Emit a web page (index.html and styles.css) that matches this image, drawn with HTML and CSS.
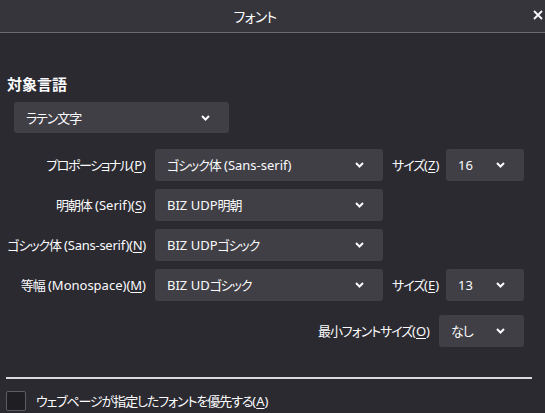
FILE: index.html
```html
<!DOCTYPE html>
<html lang="ja">
<head>
<meta charset="utf-8">
<link rel="stylesheet" href="styles.css">
</head>
<body>
<div class="dialog">
  <div class="titlebar">
    <div class="title">フォント</div>
    <div class="close">
      <svg width="10" height="10" viewBox="0 0 10 10"><path d="M1 1L9 9M9 1L1 9" stroke="#fbfbfe" stroke-width="1.8" fill="none"/></svg>
    </div>
  </div>
  <div class="content">
    <h2 class="heading">対象言語</h2>
    <div class="select lang"><span class="jp">ラテン文字</span><svg class="chev" width="9" height="6" viewBox="0 0 9 6"><path d="M1 1L4.5 4.5L8 1" stroke="#fbfbfe" stroke-width="2" fill="none"/></svg></div>

    <div class="grid">
      <div class="label"><span class="jp tight">プロポーショナル</span>(<u>P</u>)</div>
      <div class="select"><span><span class="jp">ゴシック体</span> (Sans-serif)</span><svg class="chev" width="9" height="6" viewBox="0 0 9 6"><path d="M1 1L4.5 4.5L8 1" stroke="#fbfbfe" stroke-width="2" fill="none"/></svg></div>
      <div class="label small"><span class="jp">サイズ</span>(<u>Z</u>)</div>
      <div class="select"><span>16</span><svg class="chev" width="9" height="6" viewBox="0 0 9 6"><path d="M1 1L4.5 4.5L8 1" stroke="#fbfbfe" stroke-width="2" fill="none"/></svg></div>

      <div class="label"><span class="jp">明朝体</span>&nbsp;(Serif)(<u>S</u>)</div>
      <div class="select"><span>BIZ UDP<span class="jp">明朝</span></span><svg class="chev" width="9" height="6" viewBox="0 0 9 6"><path d="M1 1L4.5 4.5L8 1" stroke="#fbfbfe" stroke-width="2" fill="none"/></svg></div>
      <div></div><div></div>

      <div class="label condensed"><span class="jp">ゴシック体</span>&nbsp;(Sans-serif)(<u>N</u>)</div>
      <div class="select"><span>BIZ UDP<span class="jp">ゴシック</span></span><svg class="chev" width="9" height="6" viewBox="0 0 9 6"><path d="M1 1L4.5 4.5L8 1" stroke="#fbfbfe" stroke-width="2" fill="none"/></svg></div>
      <div></div><div></div>

      <div class="label"><span class="jp">等幅</span>&nbsp;(Monospace)(<u>M</u>)</div>
      <div class="select"><span>BIZ UD<span class="jp">ゴシック</span></span><svg class="chev" width="9" height="6" viewBox="0 0 9 6"><path d="M1 1L4.5 4.5L8 1" stroke="#fbfbfe" stroke-width="2" fill="none"/></svg></div>
      <div class="label small"><span class="jp">サイズ</span>(<u>E</u>)</div>
      <div class="select"><span>13</span><svg class="chev" width="9" height="6" viewBox="0 0 9 6"><path d="M1 1L4.5 4.5L8 1" stroke="#fbfbfe" stroke-width="2" fill="none"/></svg></div>
    </div>

    <div class="minrow">
      <div class="label"><span class="jp">最小フォントサイズ</span>(<u>O</u>)</div>
      <div class="select minsel"><span class="jp">なし</span><svg class="chev" width="9" height="6" viewBox="0 0 9 6"><path d="M1 1L4.5 4.5L8 1" stroke="#fbfbfe" stroke-width="2" fill="none"/></svg></div>
    </div>

    <div class="sep"></div>

    <div class="checkrow">
      <div class="checkbox"></div>
      <div class="checklabel"><span class="jp">ウェブページが指定したフォントを優先する</span>(<u>A</u>)</div>
    </div>
  </div>
</div>
</body>
</html>
```

FILE: styles.css
```css
* { box-sizing: border-box; }
html, body {
  margin: 0;
  padding: 0;
  background: #2b2a30;
  color: #fbfbfe;
  font-family: "Noto Sans", "Noto Sans CJK JP", sans-serif;
  font-feature-settings: "palt";
  font-size: 13px;
  overflow: hidden;
}
.jp {
  font-family: "Noto Sans CJK JP", sans-serif;
  letter-spacing: -1.1px;
}
.jp.tight { letter-spacing: -1.5px; }
.dialog {
  width: 545px;
  height: 413px;
}
.titlebar {
  height: 33px;
  background: #36353b;
  border-bottom: 1px solid #6b6a70;
  display: grid;
  grid-template-columns: 1fr 35px;
  align-items: center;
}
.title {
  text-align: center;
  font-family: "Noto Sans CJK JP", sans-serif;
  font-size: 14px;
  letter-spacing: -0.8px;
  line-height: 20px;
}
.close {
  display: flex;
  justify-content: flex-end;
  padding-right: 2px;
  padding-bottom: 3px;
}
.close svg { display: block; }
.content {
  padding: 0 6px;
}
.heading {
  margin: 41px 0 0 1px;
  font-family: "Noto Sans CJK JP", sans-serif;
  font-size: 15px;
  line-height: 20px;
  font-weight: 700;
}
.select {
  height: 32px;
  background: #403f45;
  border-radius: 3px;
  display: flex;
  align-items: center;
  justify-content: space-between;
  padding: 0 19px 0 12px;
  line-height: 20px;
  white-space: nowrap;
}
.chev { display: block; flex: none; }
.lang {
  margin: 8px 0 0 8px;
  width: 215px;
  height: 31px;
  padding-right: 19px;
}
.grid {
  margin-top: 16px;
  display: grid;
  grid-template-columns: 140px 228px 45px 78px;
  grid-auto-rows: 32px;
  column-gap: 9px;
  row-gap: 8px;
}
.label {
  display: flex;
  align-items: center;
  justify-content: flex-end;
  white-space: nowrap;
  line-height: 20px;
}
.label.condensed { letter-spacing: -0.25px; }
.label.small { justify-content: flex-start; }
u { text-underline-offset: 2px; }
.minrow {
  margin-top: 14px;
  display: flex;
  justify-content: flex-end;
  gap: 9px;
  padding-right: 15px;
}
.minsel { width: 85px; }
.sep {
  margin-top: 30px;
  width: 526px;
  height: 2px;
  background: #dcdcde;
}
.checkrow {
  margin-top: 12px;
  display: flex;
  align-items: center;
  gap: 10px;
}
.checkbox {
  width: 20px;
  height: 20px;
  border: 1px solid #5c5b61;
  background: #1f1e23;
  border-radius: 2px;
}
.checklabel { line-height: 20px; white-space: nowrap; }
```
